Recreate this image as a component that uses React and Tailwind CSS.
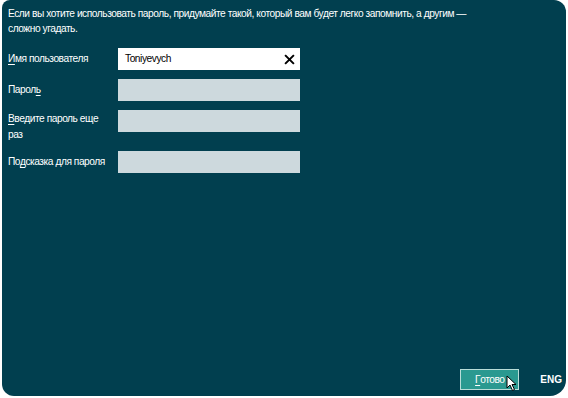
import React from "react";

const Label = ({ u, rest, className = "" }) => (
  <span className={className}>
    <span className="underline underline-offset-2">{u}</span>
    {rest}
  </span>
);

export default function App() {
  return (
    <div className="w-[568px] h-[398px] bg-white" style={{ fontFamily: '"Liberation Sans", Arial, sans-serif' }}>
      <div className="ml-[2px] w-[564px] h-[396px] bg-[#013f4f] rounded-tl-[8px] rounded-tr-[12px] rounded-br-[16px] rounded-bl-[12px] text-white flex flex-col tracking-[-0.45px]">
        <p className="pl-[6px] pt-[6px] text-[10.2px] leading-[15px] whitespace-nowrap">
          Если вы хотите использовать пароль, придумайте такой, который вам будет легко запомнить, а другим —
          <br />
          сложно угадать.
        </p>

        <div className="mt-[12px] pl-[6px] flex flex-col text-[10.2px]">
          <div className="flex items-center h-[22px]">
            <Label u="И" rest="мя пользователя" className="w-[110px]" />
            <div className="w-[182px] h-[22px] bg-white text-black flex items-center justify-between pl-[7px] pr-[5px]">
              <span>Toniyevych</span>
              <svg width="11" height="11" viewBox="0 0 10 10">
                <path d="M1 1 L9 9 M9 1 L1 9" stroke="#000" strokeWidth="1.8" />
              </svg>
            </div>
          </div>
          <div className="flex items-center h-[22px] mt-[9px]">
            <span className="w-[110px]">
              Парол<span className="underline underline-offset-2">ь</span>
            </span>
            <div className="w-[182px] h-[22px] bg-[#cdd9dd]" />
          </div>
          <div className="flex items-start h-[22px] mt-[9px]">
            <span className="w-[104px] mr-[6px] leading-[16px] pt-[1px]">
              <span className="underline underline-offset-2">В</span>ведите пароль еще
              <br />
              раз
            </span>
            <div className="w-[182px] h-[22px] bg-[#cdd9dd]" />
          </div>
          <div className="flex items-center h-[22px] mt-[19px]">
            <span className="w-[110px] whitespace-nowrap">
              По<span className="underline underline-offset-2">д</span>сказка для пароля
            </span>
            <div className="w-[182px] h-[22px] bg-[#cdd9dd]" />
          </div>
        </div>

        <div className="mt-auto mb-[6px] flex items-center justify-end pr-[4px]">
          <div className="relative">
            <button className="w-[59px] h-[21px] bg-[#2a9990] border border-[#b9ddd8] text-[10.2px] text-white flex items-center justify-center">
              <span className="underline underline-offset-2">Г</span>отово
            </button>
            <svg className="absolute left-[46px] top-[6px]" width="12" height="17" viewBox="0 0 12 17">
              <path d="M1 1 L1 13 L4 10 L6.5 15.5 L8.5 14.5 L6 9.5 L10 9.5 Z" fill="#fff" stroke="#000" strokeWidth="1" strokeLinejoin="round" />
            </svg>
          </div>
          <span className="ml-[21px] text-[10px] font-bold tracking-normal">ENG</span>
        </div>
      </div>
    </div>
  );
}
